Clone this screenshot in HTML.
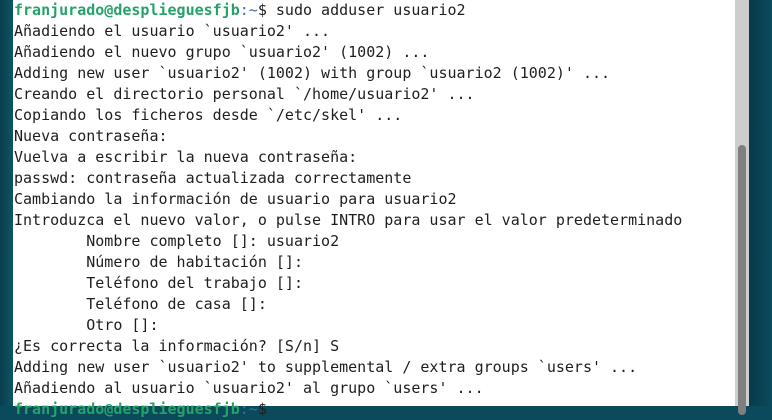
<!DOCTYPE html>
<html><head><meta charset="utf-8"><style>
html,body{margin:0;padding:0;width:772px;height:406px;overflow:hidden;background:#0b4a5c}
.left{position:absolute;left:0;top:0;width:13px;height:406px;background:linear-gradient(90deg,#0b3d4d,#0e5566)}
.term{position:absolute;left:13px;top:0;width:722px;height:406px;background:#fff}
.sb{position:absolute;left:735px;top:0;width:14px;height:406px;background:#cdcdcd}
.thumb{position:absolute;left:738px;top:145px;width:8px;height:270px;background:#7f7f7f;border-radius:4px}
.right{position:absolute;left:749px;top:0;width:23px;height:406px;background:linear-gradient(90deg,#083a4a,#0b4a5c)}
pre{position:absolute;left:14px;top:0px;margin:0;font-family:"DejaVu Sans Mono","Liberation Mono",monospace;font-size:15px;line-height:21px;color:#1e1e1e;white-space:pre}
.g{color:#26a269;font-weight:bold}.b{color:#3a6ea5}
</style></head><body>
<div class="left"></div><div class="term"></div><div class="sb"></div><div class="thumb"></div><div class="right"></div>
<pre><span class="g">franjurado@desplieguesfjb</span><span class="b">:~</span>$ sudo adduser usuario2
Añadiendo el usuario `usuario2' ...
Añadiendo el nuevo grupo `usuario2' (1002) ...
Adding new user `usuario2' (1002) with group `usuario2 (1002)' ...
Creando el directorio personal `/home/usuario2' ...
Copiando los ficheros desde `/etc/skel' ...
Nueva contraseña:
Vuelva a escribir la nueva contraseña:
passwd: contraseña actualizada correctamente
Cambiando la información de usuario para usuario2
Introduzca el nuevo valor, o pulse INTRO para usar el valor predeterminado
        Nombre completo []: usuario2
        Número de habitación []:
        Teléfono del trabajo []:
        Teléfono de casa []:
        Otro []:
¿Es correcta la información? [S/n] S
Adding new user `usuario2' to supplemental / extra groups `users' ...
Añadiendo al usuario `usuario2' al grupo `users' ...
<span class="g">franjurado@desplieguesfjb</span><span class="b">:~</span>$</pre>
</body></html>
